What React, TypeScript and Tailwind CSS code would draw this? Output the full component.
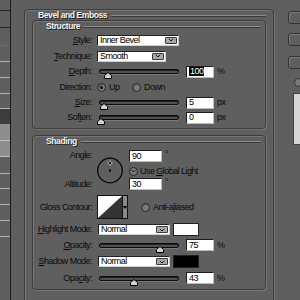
import React from "react";

function U({ children }: { children: React.ReactNode }) {
  return <span className="underline underline-offset-[1px] decoration-[1px]">{children}</span>;
}

function Label({ children }: { children: React.ReactNode }) {
  return <div className="w-[59px] shrink-0 text-right leading-none whitespace-nowrap">{children}</div>;
}

function Arrow() {
  return (
    <div className="flex items-center justify-center w-[12px] h-[7px] bg-[#a9a9a9] border border-[#3a3a3a] rounded-[1px] mr-[1px]">
      <svg width="6" height="4" viewBox="0 0 6 4">
        <path d="M0.8 0.8 L3 3 L5.2 0.8" fill="none" stroke="#111" strokeWidth="1" />
      </svg>
    </div>
  );
}

function Select({ text, cls }: { text: string; cls: string }) {
  return (
    <div className={"flex items-center justify-between h-[11px] bg-white border border-[#222] border-r-[#cfcfcf] border-b-[#cfcfcf] pl-[2px] text-black leading-none " + cls}>
      <span>{text}</span>
      <Arrow />
    </div>
  );
}

function Slider({ pos }: { pos: number }) {
  return (
    <div className="relative w-[80px] h-[5px] rounded-[2px] border border-[#0c0c0c] bg-[#505050] shadow-[inset_0_1px_0_#202020,0_1px_0_#7a7a7a]">
      <svg className="absolute top-[2px]" style={{ left: pos }} width="8" height="7" viewBox="0 0 8 7">
        <path d="M4 0.5 L7.5 3.5 V6.5 H0.5 V3.5 Z" fill="#d2d2d2" stroke="#000" strokeWidth="1" />
      </svg>
    </div>
  );
}

function Field({ children, cls }: { children: React.ReactNode; cls: string }) {
  return (
    <div className={"flex items-center h-[12px] bg-white border border-[#1c1c1c] border-r-[#bdbdbd] border-b-[#bdbdbd] pl-[2px] text-black leading-none " + cls}>
      {children}
    </div>
  );
}

function Radio({ on }: { on?: boolean }) {
  return (
    <div className="flex items-center justify-center w-[9px] h-[9px] rounded-full bg-[#7c7c7c] border border-[#262626] shadow-[inset_1px_1px_0_#5a5a5a]">
      {on && <div className="w-[3px] h-[3px] rounded-full bg-black" />}
    </div>
  );
}

function Title({ children }: { children: React.ReactNode }) {
  return (
    <div className="flex items-center h-[11px] pl-[13px] pr-[4px]">
      <span className="text-[#f2f2f2] text-[8.5px] font-bold tracking-[-0.4px] leading-none [text-shadow:1px_1px_0_#1e1e1e]">{children}</span>
      <div className="flex-1 ml-[4px] h-[1px] bg-[#8c8c8c] shadow-[0_1px_0_#3a3a3a]" />
    </div>
  );
}

function LeftStrip() {
  return (
    <div className="w-[11px] h-[300px] shrink-0 border-r border-[#1a1a1a] flex flex-col">
      <div className="h-[11px] border-b border-[#242424]" />
      <div className="h-[17px] border-b border-[#242424]" />
      <div className="h-[18px] border-b border-[#6c6c6c]" />
      <div className="h-[16px] border-b border-[#b4b4b4]" />
      <div className="h-[16px] border-b border-[#b4b4b4]" />
      <div className="h-[16px] border-b border-[#b4b4b4]" />
      <div className="h-[15px] border-b border-[#b4b4b4]" />
      <div className="h-[15px] bg-[#3d3d3d]" />
      <div className="h-[17px] bg-[#8e8e8e] border-b border-[#c0c0c0]" />
      <div className="h-[16px] bg-[#8e8e8e] border-b border-[#c0c0c0]" />
      <div className="h-[17px] border-b border-[#b4b4b4]" />
      <div className="h-[15px] border-b border-[#b4b4b4]" />
      <div className="h-[16px] border-b border-[#b4b4b4]" />
      <div className="h-[16px] border-b border-[#b4b4b4]" />
      <div className="h-[16px] border-b border-[#b4b4b4]" />
    </div>
  );
}

function RightCol() {
  return (
    <div className="ml-[14px] w-[20px] shrink-0 flex flex-col">
      <div className="mt-[11px] h-[13px] w-[20px] rounded-[3px] border border-[#333] shadow-[inset_1px_1px_0_#7a7a7a]" />
      <div className="mt-[9px] h-[13px] w-[20px] rounded-[3px] border border-[#333] shadow-[inset_1px_1px_0_#7a7a7a]" />
      <div className="mt-[10px] h-[13px] w-[20px] rounded-[3px] border border-[#333] shadow-[inset_1px_1px_0_#7a7a7a]" />
      <div className="mt-[9px] ml-[6px] h-[9px] w-[9px] rounded-full border border-[#333] bg-[#7a7a7a]" />
      <div className="mt-[6px] ml-[5px] h-[52px] w-[20px] bg-[#d6d6d6] border border-[#444]" />
    </div>
  );
}

const boxCls = "border border-[#3c3c3c] rounded-[4px] shadow-[inset_1px_1px_0_#767676,1px_1px_0_#767676]";

export default function App() {
  return (
    <div className="w-[300px] h-[300px] overflow-hidden bg-[#5f5f5f] flex font-['Liberation_Sans',Arial,sans-serif] text-[9px] tracking-[-0.55px] text-[#0a0a0a]">
      <LeftStrip />
      <div className={"ml-[13px] mt-[9px] w-[250px] h-[300px] shrink-0 px-[7px] " + boxCls}>
        <div className="flex items-center h-[10px] pl-[6px]">
          <span className="text-[#f2f2f2] text-[8.5px] font-bold tracking-[-0.4px] leading-none [text-shadow:1px_1px_0_#1e1e1e]">Bevel and Emboss</span>
          <div className="flex-1 ml-[4px] h-[1px] bg-[#8c8c8c] shadow-[0_1px_0_#3a3a3a]" />
        </div>

        {/* Structure */}
        <div className={"w-[234px] h-[109px] " + boxCls}>
          <Title>Structure</Title>
          <div className="flex items-center h-[16px]">
            <Label><U>S</U>tyle:</Label>
            <div className="ml-[5px]"><Select text="Inner Bevel" cls="w-[82px]" /></div>
          </div>
          <div className="flex items-center h-[16px]">
            <Label><U>T</U>echnique:</Label>
            <div className="ml-[5px]"><Select text="Smooth" cls="w-[69px]" /></div>
          </div>
          <div className="flex items-center h-[15px]">
            <Label><U>D</U>epth:</Label>
            <div className="ml-[7px]"><Slider pos={4} /></div>
            <div className="ml-[7px]">
              <Field cls="w-[28px]"><span className="bg-black text-white px-[1px]">100</span></Field>
            </div>
            <span className="ml-[3px] leading-none">%</span>
          </div>
          <div className="flex items-center h-[16px]">
            <Label>Direction:</Label>
            <div className="ml-[5px] w-[35px] flex items-center">
              <Radio on />
              <span className="ml-[3px] leading-none">Up</span>
            </div>
            <Radio />
            <span className="ml-[3px] leading-none">Down</span>
          </div>
          <div className="flex items-center h-[15px]">
            <Label><U>S</U>ize:</Label>
            <div className="ml-[7px]"><Slider pos={0} /></div>
            <div className="ml-[7px]"><Field cls="w-[28px]">5</Field></div>
            <span className="ml-[3px] leading-none">px</span>
          </div>
          <div className="flex items-center h-[15px]">
            <Label>Sof<U>t</U>en:</Label>
            <div className="ml-[7px]"><Slider pos={-3} /></div>
            <div className="ml-[7px]"><Field cls="w-[28px]">0</Field></div>
            <span className="ml-[3px] leading-none">px</span>
          </div>
        </div>

        {/* Shading */}
        <div className={"mt-[6px] w-[234px] h-[155px] " + boxCls}>
          <Title>Shading</Title>
          <div className="flex h-[45px]">
            <div className="w-[59px] shrink-0 flex flex-col items-end">
              <div className="mt-[2px] h-[12px] flex items-center leading-none">An<U>g</U>le:</div>
              <div className="mt-[17px] h-[12px] flex items-center leading-none">Altitude:</div>
            </div>
            <svg className="ml-[4px] mt-[10px]" width="29" height="27" viewBox="0 0 29 27">
              <circle cx="14" cy="13.5" r="12.3" fill="none" stroke="#000" strokeWidth="1.2" />
              <path d="M14 3.5 V8.5 M11.5 6 H16.5" stroke="#d8d8d8" strokeWidth="1" />
              <rect x="13" y="5" width="2" height="2" fill="#111" />
              <rect x="13" y="12.5" width="2" height="2" fill="#000" />
            </svg>
            <div className="ml-[4px] flex flex-col">
              <div className="mt-[3px] flex items-center">
                <Field cls="w-[33px]">90</Field>
                <span className="ml-[3px] leading-none self-start">°</span>
              </div>
              <div className="mt-[4px] h-[10px] flex items-center">
                <div className="flex items-center justify-center w-[9px] h-[9px] rounded-full bg-[#7c7c7c] border border-[#262626]">
                  <svg width="5" height="4" viewBox="0 0 5 4"><path d="M0.5 1 L2.5 3 L4.5 1" fill="none" stroke="#111" strokeWidth="1" /></svg>
                </div>
                <span className="ml-[2px] leading-none whitespace-nowrap">Use <U>G</U>lobal Light</span>
              </div>
              <div className="mt-[2px] flex items-center">
                <Field cls="w-[33px]">30</Field>
                <span className="ml-[3px] leading-none self-start">°</span>
              </div>
            </div>
          </div>
          <div className="mt-[3px] flex items-center h-[24px]">
            <Label>Gloss Contour:</Label>
            <div className="ml-[5px] flex h-[24px] w-[31px] border border-[#111] bg-[#8a8a8a]">
              <svg width="24" height="22" viewBox="0 0 24 22">
                <rect x="0" y="0" width="24" height="22" fill="#fff" />
                <path d="M0 22 L24 0 V22 Z" fill="#333" />
              </svg>
              <div className="flex-1 flex items-center justify-center border-l border-[#111]">
                <svg width="4" height="3" viewBox="0 0 4 3"><path d="M0 0 H4 L2 3 Z" fill="#000" /></svg>
              </div>
            </div>
            <div className="ml-[13px]"><Radio /></div>
            <span className="ml-[3px] leading-none">Anti-a<U>l</U>iased</span>
          </div>
          <div className="mt-[4px] flex items-center h-[13px]">
            <Label><U>H</U>ighlight Mode:</Label>
            <div className="ml-[6px]"><Select text="Normal" cls="w-[72px]" /></div>
            <div className="ml-[3px] w-[26px] h-[13px] bg-white border border-[#222]" />
          </div>
          <div className="mt-[3px] flex items-center h-[12px]">
            <Label><U>O</U>pacity:</Label>
            <div className="ml-[7px]"><Slider pos={56} /></div>
            <div className="ml-[7px]"><Field cls="w-[28px]">75</Field></div>
            <span className="ml-[3px] leading-none">%</span>
          </div>
          <div className="mt-[4px] flex items-center h-[13px]">
            <Label><U>S</U>hadow Mode:</Label>
            <div className="ml-[6px]"><Select text="Normal" cls="w-[72px]" /></div>
            <div className="ml-[3px] w-[26px] h-[13px] bg-black border border-[#222]" />
          </div>
          <div className="mt-[4px] flex items-center h-[12px]">
            <Label>Opa<U>c</U>ity:</Label>
            <div className="ml-[7px]"><Slider pos={30} /></div>
            <div className="ml-[7px]"><Field cls="w-[28px]">43</Field></div>
            <span className="ml-[3px] leading-none">%</span>
          </div>
        </div>
      </div>
      <RightCol />
    </div>
  );
}
